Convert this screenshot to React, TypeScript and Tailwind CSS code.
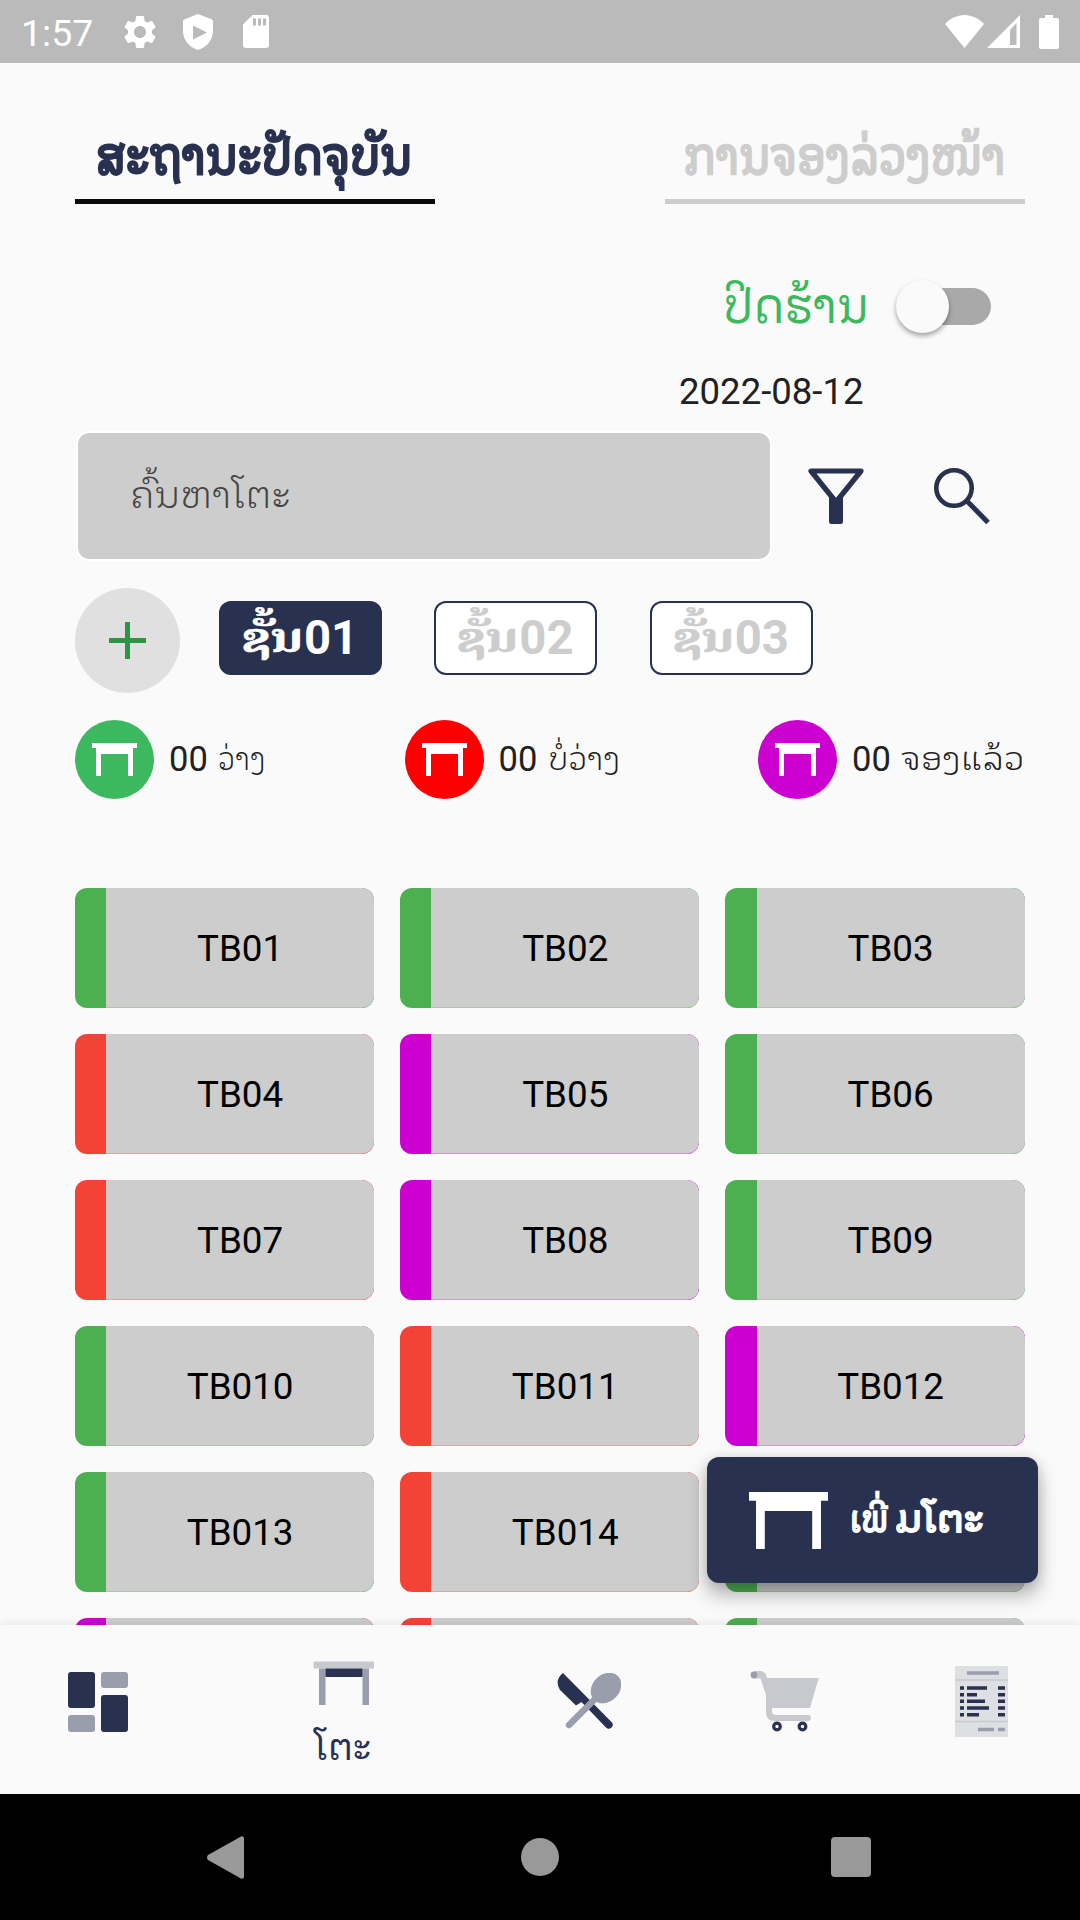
import { useLayoutEffect, useRef, useState } from "react";
import { MdSettings } from "react-icons/md";

const LAO = "font-['Noto_Sans_Lao_Looped','DejaVu_Sans',sans-serif]";

/** Single line of text squeezed or stretched horizontally to a given width. */
function FitText({ text, width, className = "" }: { text: string; width: number; className?: string }) {
  const ref = useRef<HTMLSpanElement>(null);
  const [scale, setScale] = useState(1);
  useLayoutEffect(() => {
    if (ref.current) setScale(width / ref.current.offsetWidth);
  }, [width, text]);
  return (
    <span className="block shrink-0" style={{ width }}>
      <span
        ref={ref}
        className={`inline-block origin-left whitespace-nowrap ${className}`}
        style={{ transform: `scaleX(${scale})` }}
      >
        {text}
      </span>
    </span>
  );
}

function TableIcon({ className }: { className: string }) {
  return (
    <svg viewBox="0 0 45 33" preserveAspectRatio="none" className={className} fill="currentColor">
      <path d="M0 0h45v5h-4v28h-5V11H9v22H4V5H0z" />
    </svg>
  );
}

function StatusBar() {
  return (
    <header className="flex h-[63px] shrink-0 items-center bg-[#bababa] text-white">
      <span className="ml-[21px] w-[99px] pt-[4px] text-[37.500px] leading-none">1:57</span>
      <MdSettings className="size-[40px]" />
      <svg viewBox="0 0 30 36" className="ml-[23px] h-[36px] w-[30px] fill-current">
        <path
          fillRule="evenodd"
          d="M15 0 29 5.5Q30 6 30 7.500V17C30 26 23.500 33.500 15 36 6.500 33.500 0 26 0 17V7.500Q0 6 1 5.500ZM10 11.500v14L24 18.500Z"
        />
      </svg>
      <svg viewBox="0 0 26 33" className="ml-[30px] h-[33px] w-[26px] fill-current">
        <path
          fillRule="evenodd"
          d="M9.500 0H23a3 3 0 0 1 3 3v27a3 3 0 0 1-3 3H3a3 3 0 0 1-3-3V9.500ZM10 3.500v7h3v-7ZM15 3.500v7h3v-7ZM20 3.500v7h3v-7Z"
        />
      </svg>
      <svg viewBox="0 0 39 33" className="ml-auto h-[33px] w-[39px] fill-current">
        <path d="M19.500 33 0 9C5 3.500 12 0 19.500 0S34 3.500 39 9Z" />
      </svg>
      <svg viewBox="0 0 33 33" className="ml-[3px] h-[33px] w-[33px] fill-current">
        <path fillRule="evenodd" d="M33 0v33H0ZM29.500 8 23 15v15h6.500Z" />
      </svg>
      <svg viewBox="0 0 20 34" className="mr-[21px] ml-[19px] h-[34px] w-[20px] fill-current">
        <path d="M6 0h8v3h4a2 2 0 0 1 2 2v27a2 2 0 0 1-2 2H2a2 2 0 0 1-2-2V5a2 2 0 0 1 2-2h4Z" />
      </svg>
    </header>
  );
}

function Tab({ label, width, active = false }: { label: string; width: number; active?: boolean }) {
  return (
    <button
      className={
        active
          ? "flex h-[141px] w-[360px] justify-center border-b-[5px] border-[#0a0a0a] pt-[48px] pr-[2px] text-[#283150] [-webkit-text-stroke:2.8px_#283150]"
          : "flex h-[141px] w-[360px] justify-center border-b-[5px] border-[#cdcdcd] pt-[48px] pr-[1px] text-[#cdcdcd] [-webkit-text-stroke:2.4px_#cdcdcd]"
      }
    >
      <FitText text={label} width={width} className={`${LAO} text-left text-[51px] leading-[80px]`} />
    </button>
  );
}

const floors = [
  { no: "01", active: true },
  { no: "02", active: false },
  { no: "03", active: false },
];

const legend = [
  { color: "bg-[#3cb95e]", label: "ວ່າງ", width: 48 },
  { color: "bg-[#ff0000]", label: "ບໍ່ວ່າງ", width: 72 },
  { color: "bg-[#cd00d2]", label: "ຈອງແລ້ວ", width: 124 },
];

const FREE = { bar: "bg-[#4caf50]", edge: "border-[#4caf50]/25" };
const BUSY = { bar: "bg-[#f44336]", edge: "border-[#f44336]/25" };
const BOOKED = { bar: "bg-[#cd00d2]", edge: "border-[#cd00d2]/25" };

const tables = [
  FREE, FREE, FREE,
  BUSY, BOOKED, FREE,
  BUSY, BOOKED, FREE,
  FREE, BUSY, BOOKED,
  FREE, BUSY, FREE,
  BOOKED, BUSY, FREE,
];

function TableCard({ name, status }: { name: string; status: typeof FREE }) {
  return (
    <div className={`h-[120px] overflow-hidden rounded-[12px] pl-[31.250px] ${status.bar}`}>
      <div
        className={`flex h-[120px] items-center justify-center rounded-r-[12px] border-b bg-[#cdcdcd] pt-[3px] text-[36.750px] leading-none text-black ${status.edge}`}
      >
        {name}
      </div>
    </div>
  );
}

function BottomNav() {
  return (
    <nav className="relative z-10 h-[169px] shrink-0 bg-[#fafafa] shadow-[0_-2px_8px_rgba(0,0,0,0.08)]">
      <div className="flex items-start">
        <svg viewBox="0 0 60 60" className="mt-[47px] ml-[68px] size-[60px]">
          <g fill="#283150">
            <rect width="27" height="36" rx="3" />
            <rect x="33" y="23" width="27" height="37" rx="3" />
          </g>
          <g fill="#9a9dab">
            <rect x="33" width="27" height="16" rx="3" />
            <rect y="43" width="27" height="17" rx="3" />
          </g>
        </svg>
        <div className="ml-[185px] w-[62px] pt-[36px]">
          <svg viewBox="-0.5 -0.5 61 44" className="h-[44px] w-[61px]">
            <path d="M0 0h61v7H0z" fill="#c8c9cf" />
            <path d="M5.500 7h6.500v37H5.500zM49 7h6.500v37H49z" fill="#9a9dab" />
            <path d="M12 7h37v8.500H12z" fill="#283150" />
          </svg>
          <div className="pt-[4px]">
            <FitText text="ໂຕະ" width={58} className={`${LAO} text-[37px] leading-[70px] text-[#283150]`} />
          </div>
        </div>
        <svg viewBox="0 0 64 56" className="mt-[48px] ml-[182px] h-[56px] w-[64px]">
          <path d="M6 0 54.500 49a3.800 3.800 0 0 1-5.500 5.500L24.500 29 19 32.500 3 17Q-3 7 6 0Z" fill="#283150" />
          <path d="M12 52 38 26" stroke="#9a9dab" strokeWidth="6.500" strokeLinecap="round" />
          <ellipse cx="49" cy="15" rx="13.500" ry="16.800" transform="rotate(45 49 15)" fill="#9a9dab" />
        </svg>
        <svg viewBox="0 0 69 61" className="mt-[46px] ml-[129px] h-[61px] w-[69px]">
          <path
            fillRule="evenodd"
            d="M4 0H11Q16 1 17 7H68.500Q69 9 67.500 11L60 37H22V40Q22 44 26 44H58.500Q61 44.500 61 47T58.500 50H25Q16 50 16 41V24L10.500 7.500H4Z"
            fill="#c8c9cf"
          />
          <circle cx="4" cy="4" r="3.400" fill="#9a9dab" />
          <g fill="#fafafa" stroke="#283150" strokeWidth="3.200">
            <circle cx="27" cy="55.500" r="3.300" />
            <circle cx="52.500" cy="55.500" r="3.300" />
          </g>
        </svg>
        <svg viewBox="0 0 53 71" className="mt-[41px] ml-[136px] h-[71px] w-[53px]">
          <path d="M0 0h53v71H0z" fill="#dedfe3" />
          <path d="M0 14h53M0 55.500h53" stroke="#c9cacf" strokeWidth="1.500" />
          <path d="M12 7h32M23 63.500h16M43 63.500h7" stroke="#9a9dab" strokeWidth="3.500" />
          <path
            d="M5 22h4M12 22h20M43 22h7M5 28.700h4M12 28.700h10M43 28.700h7M5 35.300h4M12 35.300h18M43 35.300h7M5 42h4M12 42h22M43 42h7M5 48.700h4M12 48.700h12M43 48.700h7"
            stroke="#283150"
            strokeWidth="3.400"
          />
        </svg>
      </div>
    </nav>
  );
}

function SystemNav() {
  return (
    <footer className="flex h-[126px] shrink-0 items-center bg-black text-[#999]">
      <svg viewBox="0 0 37 43" className="ml-[207px] h-[43px] w-[37px] fill-current">
        <path d="M34 .6Q37-1 37 3V40Q37 44 34 42.400L1 24Q-1 21.500 1 19Z" />
      </svg>
      <div className="ml-[277px] size-[38px] rounded-full bg-[#999]" />
      <div className="ml-[272px] size-[40px] rounded-[4px] bg-[#999]" />
    </footer>
  );
}

export default function App() {
  return (
    <div className="relative flex h-[1920px] w-[1080px] flex-col overflow-hidden bg-[#fafafa] font-['Roboto',sans-serif] text-[#212121]">
      <StatusBar />

      <main className="flex min-h-0 flex-1 flex-col overflow-hidden pr-[55px] pl-[75px]">
        <div className="flex shrink-0 justify-between">
          <Tab label="ສະຖານະປັດຈຸບັນ" width={316} active />
          <Tab label="ການຈອງລ່ວງໜ້າ" width={322} />
        </div>

        <div className="mt-[57px] flex h-[90px] shrink-0 items-center justify-end pr-[34px]">
          <FitText text="ປິດຮ້ານ" width={146} className={`${LAO} mb-[10px] text-[50px] leading-[80px] text-[#3cb95e]`} />
          <div className="relative ml-[38px] h-[37px] w-[84px] rounded-full bg-[#a9a9a9]">
            <div className="absolute top-[-8px] left-[-11px] size-[53px] rounded-full bg-[#fafafa] shadow-[0_3px_5px_rgba(0,0,0,0.35)]" />
          </div>
        </div>

        <div className="mt-[1px] flex h-[78px] shrink-0 items-center justify-end pt-[2px] pr-[161px]">
          <FitText text="2022-08-12" width={185} className="text-[36.750px] leading-none" />
        </div>

        <div className="flex h-[132px] shrink-0 items-center">
          <div className="ml-[1px] flex h-[130px] w-[696px] items-center rounded-[13px] border-2 border-white bg-[#cdcdcd] bg-clip-padding pl-[52px]">
            <FitText
              text="ຄົ້ນຫາໂຕະ"
              width={161}
              className={`${LAO} mb-[8px] text-[37px] leading-[70px] font-light text-[#444]`}
            />
          </div>
          <svg viewBox="0 0 56 56" className="ml-[36px] size-[56px]">
            <path d="M3 3H53L28 34Z" fill="none" stroke="#283150" strokeWidth="5.200" strokeLinejoin="round" />
            <path d="M21 30H35V53.500Q35 56 32.500 56H23.500Q21 56 21 53.500Z" fill="#283150" />
          </svg>
          <svg viewBox="0 0 56 56" className="ml-[70px] size-[56px]" fill="none" stroke="#283150">
            <circle cx="20" cy="20" r="17.700" strokeWidth="4.600" />
            <path d="M32.500 32.500 54 54.500" strokeWidth="5" />
          </svg>
        </div>

        <div className="mt-[26px] flex h-[105px] shrink-0 items-center">
          <button className="flex size-[105px] items-center justify-center rounded-full bg-[#e0e0e0]">
            <svg viewBox="0 0 37 37" className="size-[37px]">
              <path d="M0 18.500h37M18.500 0v37" stroke="#2a9747" strokeWidth="5" />
            </svg>
          </button>
          <div className="-mt-[5px] ml-[39px] flex gap-[52.400px]">
            {floors.map((f) => (
              <button
                key={f.no}
                className={
                  f.active
                    ? "flex h-[74px] w-[163px] items-center justify-center rounded-[12px] border-[2.500px] border-[#283150] bg-[#283150] text-[47.250px] font-bold text-white"
                    : "flex h-[74px] w-[163px] items-center justify-center rounded-[12px] border-[2.500px] border-[#283150] bg-white text-[47.250px] font-bold text-[#cdcdcd]"
                }
              >
                <span className="mr-[5px] -ml-[5px]">
                  <FitText
                    text="ຊັ້ນ"
                    width={61}
                    className="pt-[1px] text-left font-['Noto_Serif_Lao','DejaVu_Sans',serif] text-[41px] leading-[73px] [-webkit-text-stroke:0.7px_currentColor]"
                  />
                </span>
                <span className="leading-[74px]">{f.no}</span>
              </button>
            ))}
          </div>
        </div>

        <div className="mt-[27px] flex h-[79px] shrink-0 justify-between">
          {legend.map((l) => (
            <div key={l.label} className="flex items-center">
              <div className={`flex size-[79px] items-center justify-center rounded-full text-white ${l.color}`}>
                <TableIcon className="h-[33px] w-[45px]" />
              </div>
              <span className="ml-[15px] w-[49px] text-[34.500px] leading-none">00</span>
              <FitText
                text={l.label}
                width={l.width}
                className={`${LAO} mb-[7px] text-[31.500px] leading-[60px] font-light`}
              />
            </div>
          ))}
        </div>

        <div className="mt-[89px] grid grid-cols-[299px_299.250px_299.500px] gap-x-[26px] gap-y-[26px]">
          {tables.map((status, i) => (
            <TableCard key={i} name={`TB0${i + 1}`} status={status} />
          ))}
        </div>
      </main>

      <button className="absolute top-[1457px] left-[707px] flex h-[126px] w-[331px] items-center rounded-[12px] bg-[#283150] pl-[42px] text-white shadow-[0_12px_20px_rgba(0,0,0,0.28),0_2px_14px_rgba(0,0,0,0.14)]">
        <TableIcon className="h-[57px] w-[79px]" />
        <span className="mb-[8px] ml-[22px] flex [-webkit-text-stroke:2px_#fff]">
          <FitText text="ເພີ່" width={38} className={`${LAO} text-left text-[37px] leading-[70px]`} />
          <span className="ml-[7px]">
            <FitText text="ມໂຕະ" width={88} className={`${LAO} text-left text-[37px] leading-[70px]`} />
          </span>
        </span>
      </button>

      <BottomNav />
      <SystemNav />
    </div>
  );
}
